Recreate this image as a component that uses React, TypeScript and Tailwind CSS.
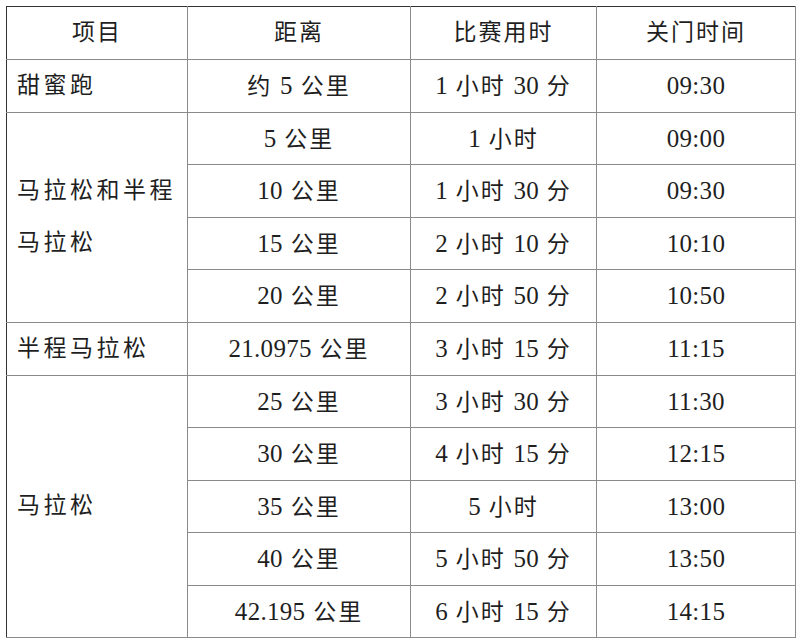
const rows: { name?: React.ReactNode; span?: number; dist: string; time: string; close: string }[] = [
  { name: "甜蜜跑", span: 1, dist: "约 5 公里", time: "1 小时 30 分", close: "09:30" },
  { name: <>马拉松和半程<br />马拉松</>, span: 4, dist: "5 公里", time: "1 小时", close: "09:00" },
  { dist: "10 公里", time: "1 小时 30 分", close: "09:30" },
  { dist: "15 公里", time: "2 小时 10 分", close: "10:10" },
  { dist: "20 公里", time: "2 小时 50 分", close: "10:50" },
  { name: "半程马拉松", span: 1, dist: "21.0975 公里", time: "3 小时 15 分", close: "11:15" },
  { name: "马拉松", span: 5, dist: "25 公里", time: "3 小时 30 分", close: "11:30" },
  { dist: "30 公里", time: "4 小时 15 分", close: "12:15" },
  { dist: "35 公里", time: "5 小时", close: "13:00" },
  { dist: "40 公里", time: "5 小时 50 分", close: "13:50" },
  { dist: "42.195 公里", time: "6 小时 15 分", close: "14:15" },
];

const cell = "border-[1.5px] border-[#8a8a8a] text-center align-middle";

// numbers are set a bit larger, like the half-width digits of the source font
function Mixed({ text }: { text: string }) {
  return (
    <>
      {text.split(/([0-9.:]+)/).map((part, i) =>
        /^[0-9.:]+$/.test(part) ? (
          <span key={i} className="text-[25px] tracking-[0.3px]">{part}</span>
        ) : (
          <span key={i}>{part}</span>
        )
      )}
    </>
  );
}

export default function App() {
  return (
    <div className="w-[800px] h-[643px] bg-white pt-[6px] pl-[6px]">
      <table
        className="table-fixed border-collapse text-[23px] tracking-[2px] leading-none text-[#1f1f1f] w-[789px]"
        style={{ fontFamily: '"Liberation Serif", "Noto Sans CJK SC", serif' }}
      >
        <colgroup>
          <col className="w-[181px]" />
          <col className="w-[223px]" />
          <col className="w-[186px]" />
          <col className="w-[199px]" />
        </colgroup>
        <thead>
          <tr className="h-[52.5px]">
            <th className={`${cell} font-normal border-t-[#333] border-l-[#333]`}>项目</th>
            <th className={`${cell} font-normal border-t-[#333]`}>距离</th>
            <th className={`${cell} font-normal border-t-[#333]`}>比赛用时</th>
            <th className={`${cell} font-normal border-t-[#333]`}>关门时间</th>
          </tr>
        </thead>
        <tbody>
          {rows.map((r, i) => (
            <tr key={i} className="h-[52.5px]">
              {r.name && (
                <td
                  rowSpan={r.span}
                  className="border-[1.5px] border-[#8a8a8a] border-l-[#333] text-left align-middle pl-[10px] pr-[2px] leading-[52px] tracking-[3.5px] whitespace-nowrap"
                >
                  {r.name}
                </td>
              )}
              <td className={cell}><Mixed text={r.dist} /></td>
              <td className={cell}><Mixed text={r.time} /></td>
              <td className={cell}><Mixed text={r.close} /></td>
            </tr>
          ))}
        </tbody>
      </table>
    </div>
  );
}
